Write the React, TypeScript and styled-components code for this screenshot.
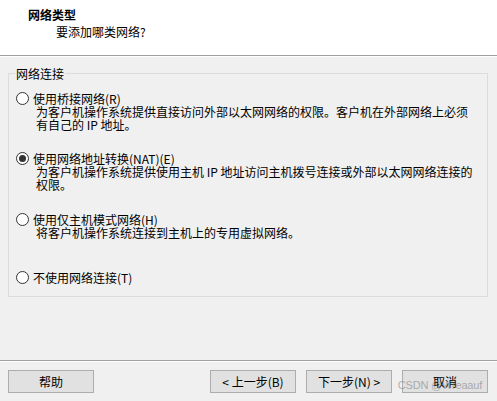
import styled, { createGlobalStyle } from "styled-components";

const GlobalStyle = createGlobalStyle`
  html, body {
    margin: 0;
    padding: 0;
    background: #f0f0f0;
  }
  body {
    font-family: "Noto Sans CJK SC", "Microsoft YaHei", sans-serif;
    font-size: 12px;
    color: #000;
  }
`;

type Option = {
  key: string;
  label: string;
  desc?: string[];
  checked?: boolean;
  gap: number;
};

const options: Option[] = [
  {
    key: "bridged",
    label: "使用桥接网络(R)",
    desc: [
      "为客户机操作系统提供直接访问外部以太网网络的权限。客户机在外部网络上必须",
      "有自己的 IP 地址。",
    ],
    gap: 12,
  },
  {
    key: "nat",
    label: "使用网络地址转换(NAT)(E)",
    desc: [
      "为客户机操作系统提供使用主机 IP 地址访问主机拨号连接或外部以太网网络连接的",
      "权限。",
    ],
    checked: true,
    gap: 21,
  },
  {
    key: "hostonly",
    label: "使用仅主机模式网络(H)",
    desc: ["将客户机操作系统连接到主机上的专用虚拟网络。"],
    gap: 22,
  },
  {
    key: "none",
    label: "不使用网络连接(T)",
    gap: 32,
  },
];

const App = () => {
  return (
    <>
      <GlobalStyle />
      <Window>
        <Header>
          <Title>网络类型</Title>
          <Subtitle>要添加哪类网络?</Subtitle>
        </Header>

        <Group>
          <Legend>网络连接</Legend>
          {options.map((opt) => (
            <Choice key={opt.key} $gap={opt.gap}>
              <ChoiceLabel>
                <Radio $checked={!!opt.checked} />
                {opt.label}
              </ChoiceLabel>
              {opt.desc && (
                <Description>
                  {opt.desc.map((line) => (
                    <div key={line}>{line}</div>
                  ))}
                </Description>
              )}
            </Choice>
          ))}
        </Group>

        <Spacer />

        <Footer>
          <Button>帮助</Button>
          <Nav>
            <Button>&lt; 上一步(B)</Button>
            <Button>下一步(N) &gt;</Button>
            <Button>取消</Button>
          </Nav>
          <Watermark>CSDN @Wreaauf</Watermark>
        </Footer>
      </Window>
    </>
  );
};

export default App;

const Window = styled.div`
  display: flex;
  flex-direction: column;
  width: 497px;
  height: 401px;
  overflow: hidden;
`;

const Header = styled.div`
  height: 56px;
  box-sizing: border-box;
  background: #ffffff;
  border-bottom: 1px solid #a0a0a0;
  box-shadow: 0 1px 0 #ffffff;
  padding: 8px 0 0 28px;
`;

const Title = styled.div`
  font-weight: 700;
  line-height: 13px;
`;

const Subtitle = styled.div`
  line-height: 13px;
  margin: 4px 0 0 28px;
`;

const Group = styled.fieldset`
  margin: 11px 9px 0 8px;
  padding: 0 6px 12px;
  border: 1px solid #dcdcdc;
  min-width: 0;
`;

const Legend = styled.legend`
  padding: 0 1px;
  line-height: 13px;
`;

const Choice = styled.div<{ $gap: number }>`
  margin-top: ${(p) => p.$gap}px;
  line-height: 13px;
`;

const ChoiceLabel = styled.div`
  display: flex;
  align-items: center;
  gap: 4px;
  margin-left: 1px;
`;

const Radio = styled.span<{ $checked: boolean }>`
  width: 13px;
  height: 13px;
  box-sizing: border-box;
  border: 1px solid #333333;
  border-radius: 50%;
  background: #ffffff;
  position: relative;
  flex: none;

  &::after {
    content: "";
    display: ${(p) => (p.$checked ? "block" : "none")};
    position: absolute;
    left: 2px;
    top: 2px;
    width: 7px;
    height: 7px;
    border-radius: 50%;
    background: #333333;
  }
`;

const Description = styled.div`
  margin-left: 21px;
  white-space: nowrap;
`;

const Spacer = styled.div`
  flex: 1;
`;

const Footer = styled.div`
  position: relative;
  display: flex;
  justify-content: space-between;
  border-top: 1px solid #a0a0a0;
  box-shadow: inset 0 1px 0 #ffffff;
  padding: 9px 9px 8px 8px;
`;

const Nav = styled.div`
  display: flex;
  gap: 10px;
`;

const Button = styled.button`
  width: 86px;
  height: 23px;
  box-sizing: border-box;
  background: #e1e1e1;
  border: 1px solid #adadad;
  border-radius: 0;
  font-family: inherit;
  font-size: 12px;
  color: #000;
  padding: 0;
  line-height: 13px;
`;

const Watermark = styled.span`
  position: absolute;
  right: 15px;
  bottom: 10px;
  font-family: "Liberation Sans", Arial, sans-serif;
  font-size: 11px;
  letter-spacing: -0.2px;
  color: rgba(110, 110, 110, 0.5);
  pointer-events: none;
`;
